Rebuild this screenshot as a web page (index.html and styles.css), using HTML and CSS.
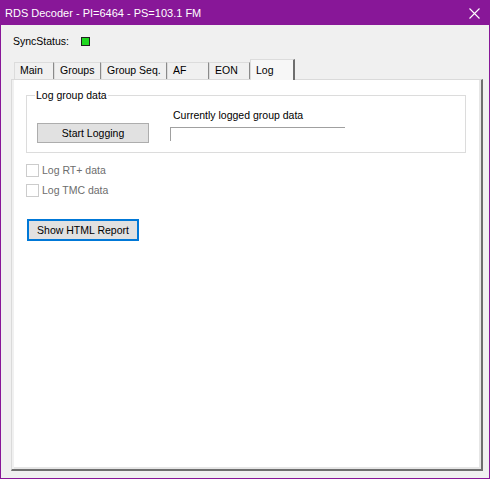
FILE: index.html
```html
<!DOCTYPE html>
<html lang="en">

<head>
    <meta charset="UTF-8">
    <title>RDS Decoder</title>
    <link rel="stylesheet" href="styles.css">
</head>

<body>
    <div class="window">
        <!-- Title bar -->
        <div class="titlebar">
            <span class="title">RDS Decoder - PI=6464 - PS=103.1 FM</span>
            <svg class="close" width="11" height="11" viewBox="0 0 11 11">
                <path d="M0.5 0.5 L10.5 10.5 M10.5 0.5 L0.5 10.5" stroke="#fff" stroke-width="1.1" fill="none" />
            </svg>
        </div>

        <div class="client">
            <div class="sync">
                <span>SyncStatus:</span>
                <span class="led"></span>
            </div>

            <!-- Tabs -->
            <div class="tabs">
                <div class="tab tab-main">Main</div>
                <div class="tab tab-groups">Groups</div>
                <div class="tab tab-seq">Group Seq.</div>
                <div class="tab tab-af">AF</div>
                <div class="tab tab-eon">EON</div>
                <div class="tab tab-log selected">Log</div>
            </div>

            <div class="panel">
                <fieldset class="group">
                    <legend>Log group data</legend>
                    <div class="group-row">
                        <button class="btn btn-start">Start Logging</button>
                        <div class="logged">
                            <div class="logged-label">Currently logged group data</div>
                            <div class="logged-box"></div>
                        </div>
                    </div>
                </fieldset>

                <label class="check"><span class="box"></span>Log RT+ data</label>
                <label class="check"><span class="box"></span>Log TMC data</label>

                <button class="btn btn-report">Show HTML Report</button>
            </div>
        </div>
    </div>
</body>

</html>
```

FILE: styles.css
```css
body {
    margin: 0;
    font-family: "Liberation Sans", Arial, sans-serif;
    font-size: 10.5px;
    color: #000;
}

.window {
    width: 490px;
    height: 479px;
    box-sizing: border-box;
    background: #881798;
    display: flex;
    flex-direction: column;
}

/* Title bar */
.titlebar {
    height: 25px;
    display: flex;
    align-items: center;
    justify-content: space-between;
    padding: 0 10px 0 5px;
    color: #fff;
    font-size: 11px;
}

.close {
    margin-top: 1px;
}

.client {
    margin: 0 1px;
    height: 453px;
    background: #f0f0f0;
}

/* Sync status */
.sync {
    display: flex;
    align-items: center;
    height: 13px;
    line-height: 13px;
    padding: 10px 0 0 12px;
}

.led {
    width: 7px;
    height: 7px;
    margin-left: 12px;
    background: #1fd81f;
    border: 1px solid #202020;
}

/* Tabs */
.tabs {
    display: flex;
    align-items: flex-end;
    height: 20px;
    margin: 11px 0 0 13px;
    position: relative;
    z-index: 1;
}

.tab {
    box-sizing: border-box;
    height: 17px;
    line-height: 14px;
    padding-left: 5px;
    border-top: 1px solid #dcdcdc;
    border-left: 1px solid #dcdcdc;
    border-right: 1px solid #8a8a8a;
    background: #f0f0f0;
}

.tab-main { width: 40px; }
.tab-groups { width: 47px; }
.tab-seq { width: 66px; }
.tab-af { width: 42px; }
.tab-eon { width: 41px; }

.tab.selected {
    width: 45px;
    height: 21px;
    padding-top: 3px;
    margin-bottom: -1px;
    background: #f7f7f7;
    border-right: 2px solid #6e6e6e;
}

/* Tab page */
.panel {
    box-sizing: border-box;
    width: 472px;
    height: 392px;
    margin-left: 10px;
    padding: 9px 0 0 14px;
    background: #fff;
    border-top: 1px solid #dadada;
    border-left: 1px solid #dadada;
    border-right: 2px solid #6e6e6e;
    border-bottom: 2px solid #6e6e6e;
    box-shadow: inset 2px 0 0 #f0f0f0, inset -2px -2px 0 #e6e6e6;
}

.group {
    box-sizing: border-box;
    width: 440px;
    margin: 0;
    padding: 7px 0 9px 8px;
    border: 1px solid #dcdcdc;
}

.group legend {
    padding: 0 1px;
    line-height: 13px;
}

.group-row {
    display: flex;
    align-items: flex-start;
}

.btn {
    box-sizing: border-box;
    width: 112px;
    font-family: inherit;
    font-size: 10.5px;
    color: #000;
    background: #e1e1e1;
    border: 1px solid #adadad;
    padding: 0;
}

.btn-start {
    height: 20px;
    margin: 14px 0 0 2px;
}

.logged {
    margin-left: 21px;
}

.logged-label {
    line-height: 13px;
    padding-left: 3px;
}

.logged-box {
    box-sizing: border-box;
    width: 175px;
    height: 14px;
    margin-top: 5px;
    border-top: 1px solid #a0a0a0;
    border-left: 1px solid #a0a0a0;
}

/* Disabled check boxes */
.check {
    display: flex;
    align-items: center;
    height: 20px;
    color: #6d6d6d;
}

.check:first-of-type {
    margin-top: 7px;
}

.box {
    box-sizing: border-box;
    width: 13px;
    height: 13px;
    margin-right: 3px;
    border: 1px solid #cccccc;
    background: #fff;
}

.btn-report {
    height: 22px;
    margin: 19px 0 0 1px;
    border: 2px solid #0078d7;
}
```
